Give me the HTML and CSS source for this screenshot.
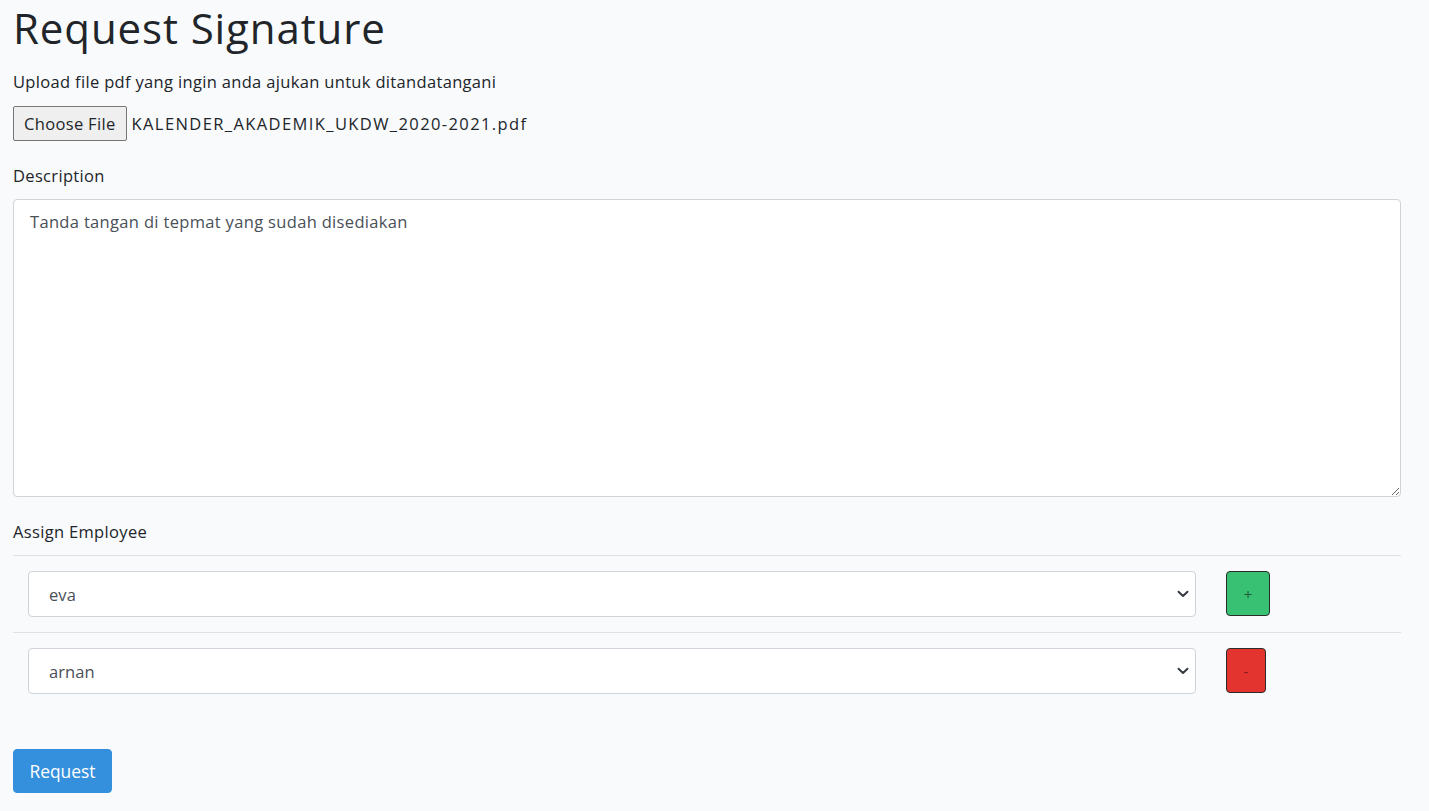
FILE: index.html
```html
<!DOCTYPE html>
<html lang="id">
<head>
<meta charset="utf-8">
<title>Request Signature</title>
<link rel="stylesheet" href="styles.css">
</head>
<body>
<main class="page">
  <h1 class="title">Request Signature</h1>
  <form class="form">
    <p class="hint">Upload file pdf yang ingin anda ajukan untuk ditandatangani</p>
    <div class="file-row">
      <button type="button" class="file-btn">Choose File</button>
      <span class="file-name">KALENDER_AKADEMIK_UKDW_2020-2021.pdf</span>
    </div>

    <label class="label" for="desc">Description</label>
    <textarea id="desc" class="textarea">Tanda tangan di tepmat yang sudah disediakan</textarea>

    <div class="label label-assign">Assign Employee</div>
    <div class="table">
      <div class="row">
        <div class="cell">
          <div class="select-wrap">
            <select class="select"><option>eva</option></select>
            <svg class="chev" width="12" height="8" viewBox="0 0 12 8"><path d="M1.5 1.8 L6 6 L10.5 1.8" fill="none" stroke="#343a40" stroke-width="2" stroke-linecap="round" stroke-linejoin="round"/></svg>
          </div>
        </div>
        <div class="cell"><button type="button" class="btn-sq btn-add">+</button></div>
      </div>
      <div class="row">
        <div class="cell">
          <div class="select-wrap">
            <select class="select"><option>arnan</option></select>
            <svg class="chev" width="12" height="8" viewBox="0 0 12 8"><path d="M1.5 1.8 L6 6 L10.5 1.8" fill="none" stroke="#343a40" stroke-width="2" stroke-linecap="round" stroke-linejoin="round"/></svg>
          </div>
        </div>
        <div class="cell"><button type="button" class="btn-sq btn-del">-</button></div>
      </div>
    </div>

    <button type="button" class="btn-primary">Request</button>
  </form>
</main>
</body>
</html>
```

FILE: styles.css
```css
html, body {
  margin: 0;
  padding: 0;
}
body {
  background: #f8fafc;
  color: #212529;
  font-family: "Open Sans", "Noto Sans", sans-serif;
  font-size: 16.5px;
  letter-spacing: 0.33px;
  line-height: 25px;
}
.page {
  padding: 0 28px 0 13px;
}
.title {
  margin: 0;
  padding-top: 3px;
  font-size: 42px;
  font-weight: 400;
  letter-spacing: 0.9px;
  line-height: 50px;
  color: #212529;
}
.form {
  display: flex;
  flex-direction: column;
  align-items: flex-start;
}
.hint {
  margin: 16px 0 0;
  line-height: 25px;
}
.file-row {
  display: flex;
  align-items: center;
  gap: 5px;
  margin-top: 12px;
}
.file-btn {
  height: 35px;
  padding: 0 10px;
  background: #efefef;
  border: 1px solid #767676;
  border-radius: 2px;
  font-family: inherit;
  font-size: 16.5px;
  letter-spacing: 0.33px;
  color: #212529;
}
.file-name {
  letter-spacing: 1.4px;
}
.label {
  display: block;
  margin-top: 22px;
  line-height: 25px;
}
.textarea {
  box-sizing: border-box;
  width: 100%;
  height: 298px;
  margin-top: 11px;
  padding: 9px 16px;
  border: 1px solid #ced4da;
  border-radius: 4px;
  background: #fff;
  color: #495057;
  font-family: inherit;
  font-size: 16.5px;
  letter-spacing: 0.33px;
  line-height: 25px;
}
.label-assign {
  margin-top: 22px;
}
.table {
  width: 100%;
  margin-top: 11px;
}
.row {
  display: grid;
  grid-template-columns: 1fr 190px;
  border-top: 1px solid #dee2e6;
}
.cell {
  padding: 15px;
  display: flex;
  align-items: flex-start;
}
.select-wrap {
  position: relative;
  width: 100%;
}
.select {
  display: block;
  box-sizing: border-box;
  width: 100%;
  height: 46px;
  padding: 0 20px;
  border: 1px solid #ced4da;
  border-radius: 4px;
  background: #fff;
  color: #495057;
  font-family: inherit;
  font-size: 16.5px;
  letter-spacing: 0.1px;
  appearance: none;
  -webkit-appearance: none;
}
.chev {
  position: absolute;
  right: 7px;
  top: 19px;
  pointer-events: none;
}
.btn-sq {
  height: 45px;
  border: 1px solid #2b2b2b;
  border-radius: 4px;
  font-family: inherit;
  font-size: 15px;
  padding: 0;
}
.btn-add {
  width: 44px;
  background: #38c172;
  color: #1d5e38;
}
.btn-del {
  width: 40px;
  background: #e3342f;
  color: #8b1b18;
}
.btn-primary {
  margin-top: 40px;
  height: 44px;
  width: 99px;
  background: #3490dc;
  color: #fff;
  border: 1px solid #3490dc;
  border-radius: 4px;
  font-family: inherit;
  font-size: 17.4px;
  letter-spacing: 0;
}
```
